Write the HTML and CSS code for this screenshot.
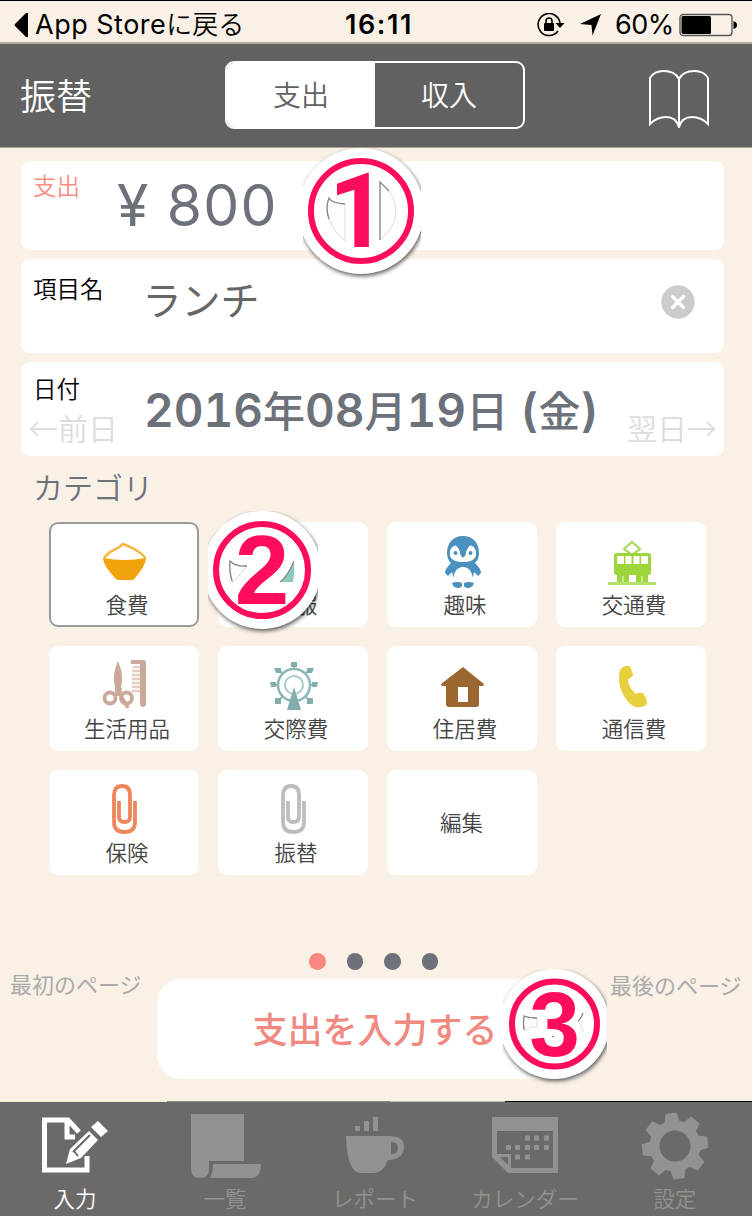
FILE: index.html
```
<!DOCTYPE html>
<html lang="ja">
<head>
  <meta charset="UTF-8" />
  <meta name="viewport" content="width=device-width, initial-scale=1.0" />
  <title>支出の入力</title>
  <link rel="stylesheet" href="styles.css">
</head>
<body>
  <div class="screen">
    <div class="status-bar">
      <div class="status-left">
        <svg width="14" height="26" viewBox="0 0 14 26"><path d="M14 1v24h-2L1 14q-1-1 0-2L12 1z" /></svg>
        <span>App Store<span class="jp">に戻る</span></span>
      </div>
      <div class="clock">16:11</div>
      <div class="status-right">
        <svg class="lock" width="28" height="24" viewBox="0 0 28 24">
          <path d="M21 18A11 11 0 1 1 23 10" fill="none" stroke="#000" stroke-width="1.6" />
          <path d="M18.500 10h9l-4.500 5z" />
          <rect x="7" y="10" width="10" height="8" rx="1" />
          <path d="M9 10V8a3 3 0 0 1 6 0v2" fill="none" stroke="#000" stroke-width="1.600" />
        </svg>
        <svg class="arrow" width="21" height="22" viewBox="0 0 21 22"><path d="M21 0 12.500 21.500 11.500 11 0 10z" /></svg>
        <span class="percent">60%</span>
        <svg width="58" height="24" viewBox="0 0 58 24">
          <rect x="1" y="1.500" width="52" height="21" rx="3" fill="none" stroke="#555" stroke-width="1.300" />
          <rect x="2.500" y="3" width="29.500" height="18" rx="1.500" />
          <path d="M54.500 8q3.500 1 3.500 4t-3.500 4z" />
        </svg>
      </div>
    </div>

    <div class="header">
      <div class="transfer">振替</div>
      <div class="segment">
        <div class="seg active">支出</div>
        <div class="seg">収入</div>
      </div>
      <svg class="book" width="60" height="58" viewBox="0 0 60 58">
        <path d="M30 9Q26 1 14.500 1 5 1 1 8V54Q8 47 17 47 27 47 30 57 33 47 43 47 52 47 59 54V8Q55 1 45.500 1 34 1 30 9zV56" />
      </svg>
    </div>

    <div class="main">
      <div class="card amount">
        <div class="label coral">支出</div>
        <div class="price">¥ 800</div>
      </div>
      <div class="card item">
        <div class="label">項目名</div>
        <div class="item-name">ランチ</div>
        <svg class="clear" width="34" height="34" viewBox="0 0 34 34">
          <circle cx="17" cy="17" r="16.700" fill="#ccc" />
          <path d="M11.500 11.500l11 11M22.500 11.500l-11 11" stroke="#fff" stroke-width="3.200" stroke-linecap="round" />
        </svg>
      </div>
      <div class="card date">
        <div class="date-side">
          <div class="label">日付</div>
          <div class="move">←前日</div>
        </div>
        <div class="day">2016<span>年</span>08<span>月</span>19<span>日</span> (<span>金</span>)</div>
        <div class="move next">翌日→</div>
      </div>

      <div class="category-title">カテゴリ</div>
      <div class="categories">
        <div class="cat selected">
          <svg width="52" height="52" viewBox="0 0 52 52">
            <path d="M5 22Q11 15 17 13 21 11 24 8 33 11 40 16 46 20 46 23" fill="#fff" stroke="#f4b63f" stroke-width="2.500" stroke-linejoin="round" />
            <path d="M4 22q21 4 43 0 0 7-11 20-1 2-4 2H20q-3 0-4-2Q4 29 4 22z" fill="#f0a30a" />
          </svg>
          <span>食費</span>
        </div>
        <div class="cat">
          <svg width="52" height="52" viewBox="0 0 52 52"><path d="M16 13 4 20l5 10 6-3v19h22V27l6 3 5-10-12-7q-10 6-20 0z" fill="#8ccabd" /></svg>
          <span>衣服</span>
        </div>
        <div class="cat">
          <svg width="52" height="52" viewBox="0 0 52 52">
            <path d="M26 0C16 0 10 7 10 17q0 6 4 10-6 6-6 10l3 3 4-4q1 8 6 11h10q5-3 6-11l4 4 3-3q0-4-6-10 4-4 4-10C42 7 36 0 26 0z" fill="#4b91bf" />
            <path d="M19 9.500c-4 0-7 5-6 10 1 4 5 6.500 13 6.500s12-2.500 13-6.500c1-5-2-10-6-10q-4 4-4 8-3 8-6 0 0-4-4-8z" fill="#fff" />
            <circle cx="18.500" cy="17" r="2" fill="#4b91bf" /><circle cx="33.500" cy="17" r="2" fill="#4b91bf" />
            <path d="M26 31c-6 0-10 6-10 14q10 5 20 0c0-8-4-14-10-14z" fill="#fff" />
            <path d="M15 47q5-2 10 0v3q-1 2-5 2-4-1-5-5zM27 47q5-2 10 0-1 4-5 5-4 0-5-2z" fill="#4b91bf" />
          </svg>
          <span>趣味</span>
        </div>
        <div class="cat">
          <svg width="52" height="52" viewBox="0 0 52 52">
            <path d="M18 13 26 6l8 7-8 6z" fill="none" stroke="#a9dc5d" stroke-width="2.200" />
            <rect x="8" y="17" width="37" height="22" rx="3" fill="#9cd63b" />
            <path d="M11 20h7v8h-7zM19.500 20h6v8h-6zM27.500 20h6v8h-6zM35 20h7v8h-7z" fill="#fff" />
            <path d="M11 38h12v9H11zM30 38h12v9H30z" fill="#9cd63b" />
            <path d="M17 40v7M36 40v7" stroke="#d6efad" stroke-width="1.500" />
            <path d="M2 47.500h48" stroke="#b4e16f" stroke-width="3" />
          </svg>
          <span>交通費</span>
        </div>
        <div class="cat">
          <svg width="52" height="52" viewBox="0 0 52 52">
            <path d="M19 1q5 12 4 20l-2 13h-4l-2-13Q14 13 19 1z" fill="#caa99a" />
            <path d="M18 27v9M21 28v6l8 14" stroke="#caa99a" stroke-width="3.500" fill="none" />
            <circle cx="11" cy="38" r="5.500" fill="none" stroke="#caa99a" stroke-width="3.800" />
            <circle cx="27.500" cy="38" r="5.500" fill="none" stroke="#caa99a" stroke-width="3.800" />
            <path d="M32 0h12q3 0 3 3v41q0 3-3 3t-3-3V4h-9z" fill="#caa99a" />
            <path d="M34 7h7M33 11h8M33 15h8M33 19h8M33 23h8M33 27h8M33 31h8" stroke="#e2cec4" stroke-width="2.500" />
          </svg>
          <span>生活用品</span>
        </div>
        <div class="cat">
          <svg width="52" height="52" viewBox="0 0 52 52">
            <g fill="none" stroke="#8db7b7" stroke-width="2">
              <circle cx="26" cy="25" r="16" stroke-width="2.500" /><circle cx="26" cy="25" r="9" stroke="#a9caca" />
              <path d="M26 9V4M37 14l4-4M42 25h6M37 36l5 5M15 14l-4-4M10 25H4M15 36l-5 5" />
            </g>
            <g fill="#83acad">
              <path d="M26 27 33 50H19z" />
              <path d="M23 2h6v5h-6zM39 8h7l-2 5h-5zM44 22h6l-1 5h-5zM39 38h6v6h-6zM6 8h7v5H8zM2 22h6v5H3zM7 38h6v6H7z" />
            </g>
          </svg>
          <span>交際費</span>
        </div>
        <div class="cat">
          <svg width="52" height="52" viewBox="0 0 52 52"><path fill-rule="evenodd" d="M26 7 47 24l-1 2h-4v18q0 3-3 3H12q-3 0-3-3V26H5l-1-2zM21 27v15h10V27z" fill="#9c6631" /></svg>
          <span>住居費</span>
        </div>
        <div class="cat">
          <svg width="52" height="52" viewBox="0 0 52 52"><path d="M14 10q4-5 9-4 3 3 4 9-1 3-5 4 0 8 8 15 2-2 7-1 4 6 4 11-4 4-11 3C22 45 13 31 13 19q0-5 1-9z" fill="#e8cf3e" /></svg>
          <span>通信費</span>
        </div>
        <div class="cat">
          <svg width="52" height="52" viewBox="0 0 52 52"><path d="M20 17V33q0 5 5.500 5t5.500-5V11q0-9-8-9t-8 9v27q0 10 10.500 10T36 38V17" fill="none" stroke="#ee855b" stroke-width="3.800" /></svg>
          <span>保険</span>
        </div>
        <div class="cat">
          <svg width="52" height="52" viewBox="0 0 52 52"><path d="M20 17V33q0 5 5.500 5t5.500-5V11q0-9-8-9t-8 9v27q0 10 10.500 10T36 38V17" fill="none" stroke="#bdbdbd" stroke-width="3.800" /></svg>
          <span>振替</span>
        </div>
        <div class="cat edit"><span>編集</span></div>
      </div>

      <div class="dots"><i class="on"></i><i></i><i></i><i></i></div>
      <div class="submit-row">
        <div class="page-link">最初のページ</div>
        <div class="submit">支出を入力する</div>
        <div class="page-link last">最後のページ</div>
      </div>
    </div>

    <div class="edge"></div>
    <div class="tab-bar">
      <div class="tab active">
        <svg width="68" height="68" viewBox="0 0 68 68">
          <path d="M3.500 8H27L38 20M3.500 5.500V58H46V44M26 8v17h8" fill="none" stroke="currentColor" stroke-width="5" />
          <path d="M25 52 29 37 48 19 57 28 40 46zM50 15l7-6 10 10-7 6z" fill="currentColor" />
          <path d="M32 40 49 23M33 39l4 5" stroke="#6b6a68" stroke-width="2" />
        </svg>
        <span>入力</span>
      </div>
      <div class="tab">
        <svg width="72" height="68" viewBox="0 0 72 68"><path d="M2 2h53v47H20v8q0 9-9 9t-9-9zM24 52h48q0 14-10 14H21q3-5 3-14z" fill="currentColor" /></svg>
        <span>一覧</span>
      </div>
      <div class="tab">
        <svg width="68" height="68" viewBox="0 0 68 68">
          <path fill-rule="evenodd" d="M5 24h44q14 0 14 11T49 48h-2Q42 61 33 61H20Q6 61 5 24zM50 30v12q7 0 7-6t-7-6zM14 14h5v5h-5zM23 9h5v10h-5zM32 5h5v14h-5z" fill="currentColor" />
        </svg>
        <span>レポート</span>
      </div>
      <div class="tab">
        <svg width="68" height="68" viewBox="0 0 68 68">
          <path fill-rule="evenodd" d="M1 5h66v56H17L1 45zM6 19v23h14v14h42V19zM9 45l8 8v-8z" fill="currentColor" />
          <path d="M34 26h5M43 26h5M53 26h5M15 35.500h5M24 35.500h5M34 35.500h5M43 35.500h5M53 35.500h5M24 45h5M34 45h5" stroke="currentColor" stroke-width="5" />
        </svg>
        <span>カレンダー</span>
      </div>
      <div class="tab">
        <svg width="68" height="68" viewBox="0 0 68 68">
          <circle cx="34" cy="34" r="20.500" fill="none" stroke="currentColor" stroke-width="10" />
          <g fill="currentColor" transform="rotate(-7 34 34)">
            <path id="tooth" d="M26 12 28.500 1h11L42 12z" />
            <use href="#tooth" transform="rotate(45 34 34)" /><use href="#tooth" transform="rotate(90 34 34)" />
            <use href="#tooth" transform="rotate(135 34 34)" /><use href="#tooth" transform="rotate(180 34 34)" />
            <use href="#tooth" transform="rotate(225 34 34)" /><use href="#tooth" transform="rotate(270 34 34)" />
            <use href="#tooth" transform="rotate(315 34 34)" />
          </g>
        </svg>
        <span>設定</span>
      </div>
    </div>

    <!-- step markers -->
    <svg class="step step1" width="118" height="134" viewBox="0 0 118 134">
      <circle class="disc" cx="58" cy="63" r="63" />
      <path class="cut" d="M42 93V56Q28 55 26 50 22 60 26 71 31 84 42 93M77 92V34Q93 47 93 63 93 80 77 92" />
      <path class="cut-top" d="M42 56Q28 55 26 50 22 60 26 71M77 92V34L86 43" />
      <circle class="ring" cx="58" cy="63" r="50" />
      <text x="55" y="99" font-size="103">1</text>
    </svg>
    <svg class="step step2" width="110" height="126" viewBox="0 0 110 126">
      <circle class="disc" cx="54" cy="59" r="59" />
      <path class="cut" d="M22 50Q28 56 39 55L25 72Q21 61 22 50" />
      <path class="cut-top" d="M39 55Q28 56 22 50 21 61 24 70" />
      <path d="M86 50Q80 65 72 71H85Q87 61 86 50" fill="#8ccabd" />
      <path class="cut-top" d="M86 50Q80 65 72 71" />
      <circle class="ring" cx="54" cy="59" r="46" />
      <text x="54" y="93" font-size="98">2</text>
    </svg>
    <svg class="step step3" width="104" height="118" viewBox="0 0 104 118">
      <circle class="disc" cx="51.500" cy="55" r="55" />
      <path class="cut" d="M21 47q7 2 13 2v9h-6l-6 4q-2-7-1-15M80 44q-2 6-5 8 4 4 5 11" />
      <path class="cut-top" d="M34 49q-8 0-13-2-1 7 0 14M80 44q-2 6-5 8" />
      <circle class="ring" cx="51.500" cy="55" r="42.500" />
      <text x="51.500" y="87" font-size="91">3</text>
      <circle cx="50" cy="67.500" r=".8" fill="#555" />
    </svg>
  </div>
</body>
</html>
```
FILE: styles.css
```
* {
  box-sizing: border-box;
}
body {
  margin: 0;
  background: #faf1e6;
  font-family: 'Noto Sans CJK JP', sans-serif;
  font-weight: 350;
  overflow: hidden;
}
svg {
  display: block;
  flex-shrink: 0;
}
.screen {
  position: relative;
  width: 750px;
  height: 1216px;
  display: flex;
  flex-direction: column;
}
.status-bar {
  height: 44px;
  border-top: 1px solid #000;
  border-bottom: 2px solid #b0a99e;
  display: grid;
  grid-template-columns: 300px 158px 1fr;
  align-items: center;
  padding-top: 6px;
  font-family: Inter, 'Noto Sans CJK JP', sans-serif;
  font-size: 27px;
  line-height: 36px;
  font-weight: 400;
}
.status-left {
  display: flex;
  align-items: center;
  gap: 7px;
  padding-left: 14px;
  letter-spacing: 0.5px;
}
.jp {
  font-weight: 350;
  font-size: 26px;
  letter-spacing: 0;
}
.clock {
  text-align: center;
  font-weight: 600;
  letter-spacing: 1.6px;
}
.status-right {
  display: flex;
  align-items: center;
  padding-left: 79px;
}
.arrow {
  margin-left: 15px;
}
.percent {
  margin-left: 14px;
  width: 64px;
  letter-spacing: -0.5px;
  white-space: nowrap;
}
.header {
  height: 104px;
  background: #616161;
  border-bottom: 1px solid #aaa297;
  display: flex;
  align-items: center;
  padding: 0 43px 0 20px;
  color: #fff;
}
.transfer {
  width: 205px;
  font-size: 36px;
  line-height: 40px;
  margin-top: -4px;
}
.segment {
  width: 300px;
  height: 68px;
  margin-top: -1px;
  border: 2px solid #fff;
  border-radius: 9px;
  display: flex;
  overflow: hidden;
}
.seg {
  flex: 1;
  text-align: center;
  font-size: 28px;
  line-height: 62px;
}
.seg.active {
  background: #fff;
  color: #616161;
}
.book {
  margin: 6px 0 0 auto;
  fill: none;
  stroke: #fff;
  stroke-width: 2;
}
.main {
  flex: 1;
  padding-top: 13px;
}
.card {
  width: 703px;
  height: 94px;
  margin: 0 0 9px 21px;
  background: #fff;
  border-radius: 9px;
  display: flex;
  padding-left: 12px;
}
.amount {
  height: 89px;
  margin-bottom: 9px;
}
.label {
  font-size: 23.5px;
  line-height: 30px;
  padding-top: 9px;
  color: #000;
}
.item .label {
  padding-top: 14px;
}
.coral {
  color: #fb8b80;
}
.price {
  margin-left: 37px;
  font-family: Inter, sans-serif;
  font-weight: 400;
  font-size: 57px;
  line-height: 90px;
  letter-spacing: 1.2px;
  color: #6d717a;
}
.item-name {
  margin-left: 39px;
  font-size: 39px;
  line-height: 78px;
  font-weight: 400;
  color: #666;
}
.clear {
  margin: 26px 29px 0 auto;
}
.date-side {
  width: 111px;
}
.date .label {
  padding-top: 11px;
}
.move {
  margin: 6px 0 0 -5px;
  font-size: 30px;
  line-height: 36px;
  color: #ddd;
  white-space: nowrap;
}
.move.next {
  margin: 47px 7px 0 auto;
}
.day {
  font-family: Inter, 'Noto Sans CJK JP', sans-serif;
  font-weight: 600;
  font-size: 46px;
  line-height: 96px;
  font-variant-numeric: tabular-nums;
  color: #6d717a;
  white-space: nowrap;
}
.day span {
  font-size: 42px;
  line-height: 1;
  font-weight: 500;
}
.category-title {
  margin: 13px 0 16px 33px;
  height: 37px;
  font-size: 30px;
  line-height: 34px;
  color: #6d717a;
}
.categories {
  display: grid;
  grid-template-columns: repeat(4, 150px);
  grid-auto-rows: 105px;
  gap: 19px;
  padding-left: 49px;
}
.cat {
  background: #fff;
  border-radius: 9px;
  display: flex;
  flex-direction: column;
  align-items: center;
  padding-top: 14px;
  font-size: 21.5px;
  line-height: 30px;
  color: #444;
}
.cat svg {
  margin-left: 1px;
}
.cat span {
  margin: 1px 0 0 6px;
}
.selected {
  border: 2px solid #999;
  padding-top: 12px;
}
.edit {
  padding-top: 36px;
}
.edit span {
  margin-left: -1px;
}
.dots {
  display: flex;
  gap: 21px;
  margin-top: 78px;
  padding-left: 309px;
}
.dots i {
  width: 16.5px;
  height: 16.5px;
  border-radius: 50%;
  background: #6d717a;
}
.dots .on {
  background: #fa877d;
}
.submit-row {
  display: flex;
  margin-top: 9px;
}
.page-link {
  width: 157px;
  padding-left: 10px;
  margin-top: -11px;
  font-size: 22px;
  line-height: 30px;
  font-weight: 400;
  color: #aaa;
  white-space: nowrap;
}
.page-link.last {
  padding-left: 17px;
  margin-top: -10px;
}
.submit {
  width: 436px;
  height: 100px;
  background: #fff;
  border-radius: 24px;
  text-align: center;
  font-size: 35px;
  line-height: 98px;
  font-weight: 500;
  color: #f08980;
}
.edge {
  height: 1px;
  background: linear-gradient(to right, #f3eed0 167px, #8b8d7b 167px 390px, #b9c1aa 390px 505px, #000 505px);
}
.tab-bar {
  height: 114px;
  background: #6b6a68;
  display: grid;
  grid-template-columns: repeat(5, 150px);
}
.tab {
  display: flex;
  flex-direction: column;
  align-items: center;
  padding-top: 10px;
  font-size: 21.5px;
  line-height: 30px;
  color: #929292;
}
.tab svg {
  margin-left: -1px;
}
.tab span {
  margin-top: 3px;
}
.tab.active {
  color: #fff;
}
.status-bar,
.header,
.edge,
.tab-bar {
  width: 752px;
}
/* numbered step markers lie over the app */
.step {
  position: absolute;
}
.step1 {
  left: 303px;
  top: 148px;
}
.step2 {
  left: 208px;
  top: 511px;
}
.step3 {
  left: 503px;
  top: 969px;
}
.disc {
  fill: #fff;
  filter: drop-shadow(1px 2px 2px rgba(0, 0, 0, 0.65));
}
.ring {
  fill: none;
  stroke: #ff0d5b;
  stroke-width: 6;
}
.step text {
  fill: #ff0d5b;
  font-family: 'Liberation Sans', sans-serif;
  font-weight: 700;
  text-anchor: middle;
}
.step1 text {
  font-family: Roboto, sans-serif;
}
.cut {
  fill: #fdfdfd;
  stroke: #ddd;
}
.cut-top {
  fill: none;
  stroke: #888;
  stroke-width: 1.3;
}
```
